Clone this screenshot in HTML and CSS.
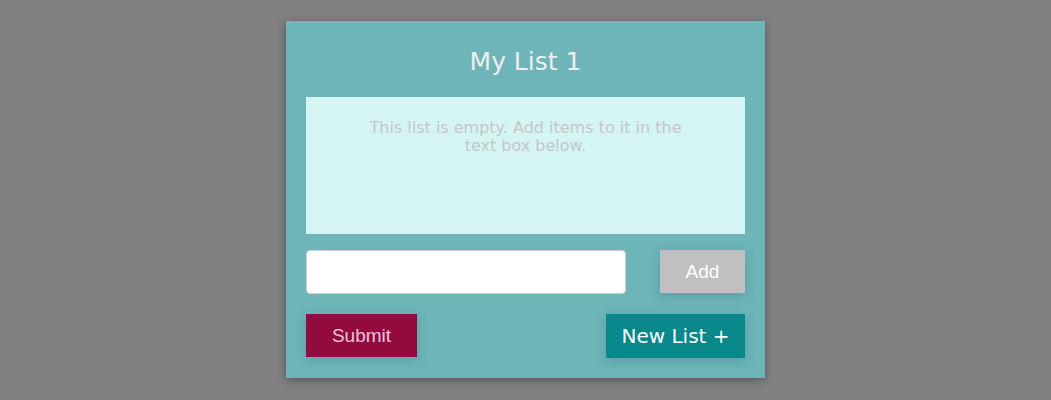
FILE: index.html
```html
<!DOCTYPE html>
<html>
<head>
<meta charset="utf-8">
<link rel="stylesheet" href="styles.css">
</head>
<body>
<div class="card">
  <h1 class="title">My List 1</h1>
  <div class="list-box">
    <p class="empty">This list is empty. Add items to it in the text box below.</p>
  </div>
  <div class="add-row">
    <input class="item-input" type="text">
    <button class="btn btn-add">Add</button>
  </div>
  <div class="action-row">
    <button class="btn btn-submit">Submit</button>
    <button class="btn btn-new">New List +</button>
  </div>
</div>
</body>
</html>
```
FILE: styles.css
```css
html, body {
  margin: 0;
  padding: 0;
  height: 100%;
}
body {
  background: #808080;
  font-family: "DejaVu Sans", Verdana, sans-serif;
  padding-top: 21px;
  box-sizing: border-box;
}
.card {
  width: 479px;
  margin: 0 auto;
  background: #6db5b8;
  box-sizing: border-box;
  padding: 20px 20px 20px;
  box-shadow: 0 2px 8px rgba(0,0,0,0.35);
}
.title {
  margin: 0;
  height: 56px;
  padding-top: 6px;
  box-sizing: border-box;
  text-align: center;
  font-size: 25px;
  font-weight: normal;
  line-height: 30px;
  color: #eeeeee;
}
.list-box {
  height: 137px;
  background: #d5f4f4;
  box-sizing: border-box;
  padding: 22px 50px 0;
}
.empty {
  margin: 0;
  text-align: center;
  font-size: 16px;
  line-height: 18px;
  color: #c6c6c6;
}
.add-row {
  display: flex;
  justify-content: space-between;
  align-items: flex-start;
  margin-top: 16px;
}
.item-input {
  width: 320px;
  height: 44px;
  box-sizing: border-box;
  border: 1px solid #cfcfcf;
  border-radius: 4px;
  background: #fff;
  margin: 0;
}
.btn {
  border: none;
  margin: 0;
  padding: 0;
  box-shadow: 0 3px 10px rgba(40,80,110,0.25);
}
.btn-add {
  width: 85px;
  height: 43px;
  background: #c0c0c0;
  color: #fff;
  font-family: "Liberation Sans", Arial, sans-serif;
  font-size: 19px;
}
.action-row {
  display: flex;
  justify-content: space-between;
  align-items: flex-start;
  margin-top: 20px;
}
.btn-submit {
  width: 111px;
  height: 43px;
  background: #930a3f;
  color: #f3c6dc;
  font-family: "Liberation Sans", Arial, sans-serif;
  font-size: 19px;
}
.btn-new {
  width: 139px;
  height: 44px;
  background: #08888b;
  color: #fff;
  font-family: "DejaVu Sans", Verdana, sans-serif;
  font-size: 20px;
}
```
